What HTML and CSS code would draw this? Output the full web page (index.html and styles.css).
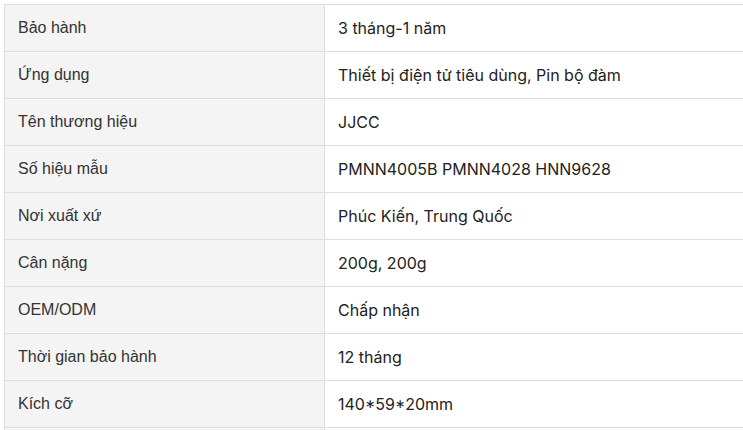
FILE: index.html
```html
<!DOCTYPE html>
<html lang="vi">
<head>
<meta charset="utf-8">
<link rel="stylesheet" href="styles.css">
</head>
<body>
<table class="spec">
<tbody>
<tr><td class="k">Bảo hành</td><td class="v">3 tháng-1 năm</td></tr>
<tr><td class="k">Ứng dụng</td><td class="v">Thiết bị điện tử tiêu dùng, Pin bộ đàm</td></tr>
<tr><td class="k">Tên thương hiệu</td><td class="v">JJCC</td></tr>
<tr><td class="k">Số hiệu mẫu</td><td class="v">PMNN4005B PMNN4028 HNN9628</td></tr>
<tr><td class="k">Nơi xuất xứ</td><td class="v">Phúc Kiến, Trung Quốc</td></tr>
<tr><td class="k">Cân nặng</td><td class="v">200g, 200g</td></tr>
<tr><td class="k">OEM/ODM</td><td class="v">Chấp nhận</td></tr>
<tr><td class="k">Thời gian bảo hành</td><td class="v">12 tháng</td></tr>
<tr><td class="k">Kích cỡ</td><td class="v">140*59*20mm</td></tr>
<tr><td class="k"></td><td class="v"></td></tr>
</tbody>
</table>
</body>
</html>
```
FILE: styles.css
```css
html, body {
  margin: 0;
  padding: 0;
  background: #fff;
  overflow: hidden;
}
body {
  padding: 4px 0 0 4px;
}
.spec {
  border-collapse: collapse;
  width: 760px;
  table-layout: fixed;
  color: #222;
  font-size: 16px;
}
.spec td {
  border: 1px solid #dddddd;
  height: 47px;
  padding: 0 13px;
  box-sizing: border-box;
  vertical-align: middle;
  line-height: 20px;
}
.k {
  width: 320px;
  background: #f4f4f4;
  font-family: "Liberation Sans", Arial, sans-serif;
  color: #333;
  padding-top: 2px;
}
.v {
  background: #fff;
  font-family: Inter, "Noto Sans", sans-serif;
  padding-left: 11px;
}
```
